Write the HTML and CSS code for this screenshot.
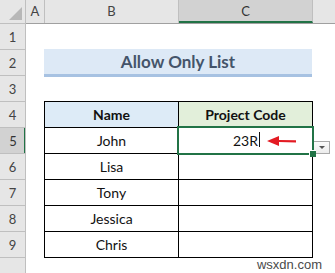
FILE: index.html
```html
<!DOCTYPE html>
<html>
<head>
    <meta charset="utf-8">
    <title>Allow Only List</title>
    <link rel="stylesheet" href="styles.css">
</head>
<body>
    <div class="sheet">
        <div class="corner"><span class="tri"></span></div>
        <div class="colbar">
            <div class="colhead col_a">A</div>
            <div class="colhead col_b">B</div>
            <div class="colhead col_c active">C</div>
            <div class="colhead col_d"></div>
        </div>
        <div class="rowbar">
            <div class="rowhead">1</div>
            <div class="rowhead">2</div>
            <div class="rowhead">3</div>
            <div class="rowhead">4</div>
            <div class="rowhead active">5</div>
            <div class="rowhead">6</div>
            <div class="rowhead">7</div>
            <div class="rowhead">8</div>
            <div class="rowhead">9</div>
            <div class="rowhead last"></div>
        </div>
        <div class="body">
            <div class="title">Allow Only List</div>
            <div class="table">
                <div class="cell head name">Name</div>
                <div class="cell head code">Project Code</div>
                <div class="cell">John</div>
                <div class="cell sel">
                    <span class="typed">23R<i class="caret"></i></span>
                    <svg class="arrow" width="32" height="12" viewBox="0 0 32 12">
                        <path d="M30 5.2 L13 5 L13 1 L1 6 L13 11 L13 7 L30 7.4 Z" fill="#e31b23"/>
                    </svg>
                    <span class="drop"><span class="down"></span></span>
                </div>
                <div class="cell">Lisa</div>
                <div class="cell"></div>
                <div class="cell">Tony</div>
                <div class="cell"></div>
                <div class="cell">Jessica</div>
                <div class="cell"></div>
                <div class="cell">Chris</div>
                <div class="cell"></div>
            </div>
            <div class="mark">wsxdn.com</div>
        </div>
    </div>
</body>
</html>
```

FILE: styles.css
```css
*{
    box-sizing: border-box;
    padding: 0;
    margin: 0;
}
body{
    width: 335px;
    height: 273px;
    overflow: hidden;
    background: #fff;
    font-family: Lato, "Liberation Sans", sans-serif;
}
.sheet{
    display: grid;
    grid-template-columns: 26px 1fr;
    grid-template-rows: 24px 249px;
    height: 273px;
    overflow: hidden;
}
.corner{
    background: #e6e6e6;
    border-right: 1px solid #bfbfbf;
    border-bottom: 1px solid #bfbfbf;
    display: flex;
    align-items: flex-end;
    justify-content: flex-end;
    padding: 0 3px 3px 0;
}
.tri{
    width: 0;
    height: 0;
    border-left: 13px solid transparent;
    border-bottom: 13px solid #b7b7b7;
}
.colbar{
    display: flex;
    background: #e6e6e6;
    border-bottom: 1px solid #a0a0a0;
}
.colhead{
    height: 23px;
    border-right: 1px solid #bfbfbf;
    color: #444;
    font-size: 13px;
    line-height: 23px;
    text-align: center;
}
.col_a{ width: 19px; }
.col_b{ width: 134px; }
.col_c{ width: 134px; }
.col_d{ flex: 1; border-right: none; }
.colhead.active{
    background: #d2d2d2;
    border-bottom: 2px solid #217346;
    line-height: 22px;
    color: #333;
}
.rowbar{
    display: flex;
    flex-direction: column;
    overflow: hidden;
    background: #e6e6e6;
    border-right: 1px solid #bfbfbf;
}
.rowhead{
    height: 26px;
    flex-shrink: 0;
    border-bottom: 1px solid #bfbfbf;
    color: #444;
    font-size: 13px;
    line-height: 27px;
    text-align: center;
}
.rowhead.active{
    background: #d2d2d2;
    box-shadow: inset -2px 0 0 #217346;
    margin-right: -1px;
    color: #333;
}
.body{
    padding: 25px 0 0 18px;
}
.title{
    width: 268px;
    height: 28px;
    background: #dde9f6;
    border-bottom: 3px solid #a7c2e2;
    color: #44546a;
    font-size: 17px;
    font-weight: bold;
    line-height: 25px;
    text-align: center;
}
.table{
    display: grid;
    grid-template-columns: 133px 133px;
    grid-auto-rows: 25px;
    gap: 1px;
    padding: 1px;
    width: 269px;
    margin-top: 24px;
    background: #000;
}
.cell{
    background: #fff;
    color: #111;
    font-size: 14px;
    line-height: 26px;
    text-align: center;
}
.cell.head{
    font-weight: bold;
}
.cell.name{ background: #ddebf7; }
.cell.code{ background: #e2efda; }
.cell.sel{
    position: relative;
}
.cell.sel::after{
    content: "";
    position: absolute;
    left: -2px;
    top: -2px;
    right: -2px;
    bottom: -2px;
    border: 2px solid #217346;
}
.cell.sel::before{
    content: "";
    position: absolute;
    right: -4px;
    bottom: -4px;
    width: 6px;
    height: 6px;
    background: #217346;
    border-left: 1px solid #fff;
    border-top: 1px solid #fff;
    z-index: 1;
}
.typed{
    position: relative;
}
.caret{
    position: absolute;
    right: -2px;
    top: 0;
    width: 1px;
    height: 15px;
    background: #111;
}
.arrow{
    position: absolute;
    left: 87px;
    top: 7px;
}
.drop{
    position: absolute;
    left: 134px;
    top: 13px;
    width: 17px;
    height: 13px;
    background: linear-gradient(#fbfbfb, #ececec);
    border: 1px solid #a9a9a9;
    display: flex;
    align-items: center;
    justify-content: center;
}
.down{
    width: 0;
    height: 0;
    border-left: 3px solid transparent;
    border-right: 3px solid transparent;
    border-top: 3px solid #555;
}
.mark{
    width: 278px;
    color: #4a4a4a;
    font-family: "Liberation Sans", sans-serif;
    font-size: 13px;
    line-height: 13px;
    text-align: right;
}
```
